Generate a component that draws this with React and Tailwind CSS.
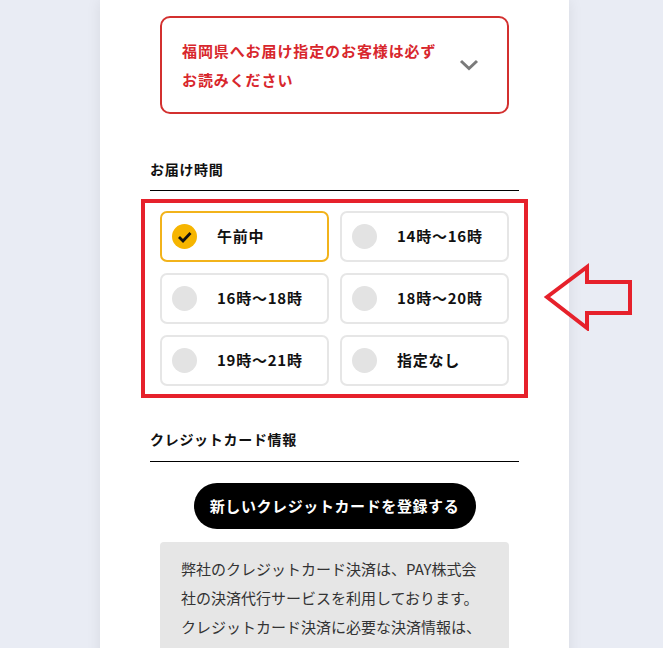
import { useState } from "react";

const slots = ["午前中", "14時〜16時", "16時〜18時", "18時〜20時", "19時〜21時", "指定なし"];

export default function App() {
  const [selected, setSelected] = useState("午前中");

  return (
    <div
      className="relative min-h-screen bg-[#e9ecf4] overflow-hidden"
      style={{ fontFamily: '"Noto Sans CJK JP", "Noto Sans", sans-serif' }}
    >
      <div className="ml-[100px] w-[469px] bg-white px-[50px] pt-4 pb-10 shadow-[0_0_14px_rgba(0,0,0,0.08)] min-h-[700px]">
        {/* NOTICE */}
        <div className="mx-[10px] flex items-center justify-between border-2 border-[#d3302f] rounded-[10px] pl-5 pr-7 py-[18px]">
          <p className="text-[15px] leading-[29px] font-bold tracking-[0.06em] text-[#d8272d]">
            福岡県へお届け指定のお客様は必ず
            <br />
            お読みください
          </p>
          <svg width="20" height="14" viewBox="0 0 20 14" className="shrink-0">
            <path d="M2 3 L10 10.5 L18 3" fill="none" stroke="#7a7a7a" strokeWidth="3" />
          </svg>
        </div>

        {/* DELIVERY TIME */}
        <div className="mt-[44px] border-b border-black pb-[10px]">
          <p className="text-[14px] leading-[22px] font-bold tracking-[0.05em] text-[#111]">お届け時間</p>
        </div>

        <div className="-mx-[9px] mt-2 border-4 border-[#e6212b] px-[15px] py-2">
          <div className="grid grid-cols-2 gap-x-[11px] gap-y-[11px]">
            {slots.map((s) => {
              const on = selected === s;
              return (
                <button
                  key={s}
                  onClick={() => setSelected(s)}
                  className={`flex items-center h-[51px] rounded-[7px] border-2 pl-[10px] text-left ${on ? "border-[#f2b31b]" : "border-[#e6e6e6]"}`}
                >
                  <span className={`flex items-center justify-center w-[25px] h-[25px] rounded-full ${on ? "bg-[#f6b500]" : "bg-[#e3e3e3]"}`}>
                    {on && (
                      <svg width="15" height="12" viewBox="0 0 15 12">
                        <path d="M2 6 L6 10 L13.5 2" fill="none" stroke="#111" strokeWidth="2.8" />
                      </svg>
                    )}
                  </span>
                  <span className="ml-[20px] text-[15px] font-bold tracking-[0.05em] text-[#111]">{s}</span>
                </button>
              );
            })}
          </div>
        </div>

        {/* CREDIT CARD */}
        <div className="mt-[30px] border-b border-black pb-[11px]">
          <p className="text-[14px] leading-[22px] font-bold tracking-[0.05em] text-[#111]">クレジットカード情報</p>
        </div>

        <div className="flex justify-center mt-[21px]">
          <button className="w-[282px] h-[46px] rounded-full bg-black text-white text-[15px] font-bold tracking-[0.04em]">
            新しいクレジットカードを登録する
          </button>
        </div>

        <div className="mx-[10px] mt-[13px] rounded-[4px] bg-[#e6e6e6] pl-[21px] pr-3 pt-[12px] pb-5">
          <p className="text-[15px] leading-[29px] text-[#333] whitespace-nowrap">
            弊社のクレジットカード決済は、PAY株式会
            <br />
            社の決済代行サービスを利用しております。
            <br />
            クレジットカード決済に必要な決済情報は、
            <br />
            PAY株式会社を経由してカード会社に直接送
            <br />
            信されます。
          </p>
        </div>
      </div>

      {/* annotation arrow */}
      <svg className="absolute left-[543px] top-[263px]" width="92" height="68" viewBox="0 0 92 68">
        <path
          d="M4 34 L44 4 L44 19 L87 19 L87 50 L44 50 L44 65 Z"
          fill="none"
          stroke="#e6212b"
          strokeWidth="4"
          strokeLinejoin="miter"
        />
      </svg>
    </div>
  );
}
